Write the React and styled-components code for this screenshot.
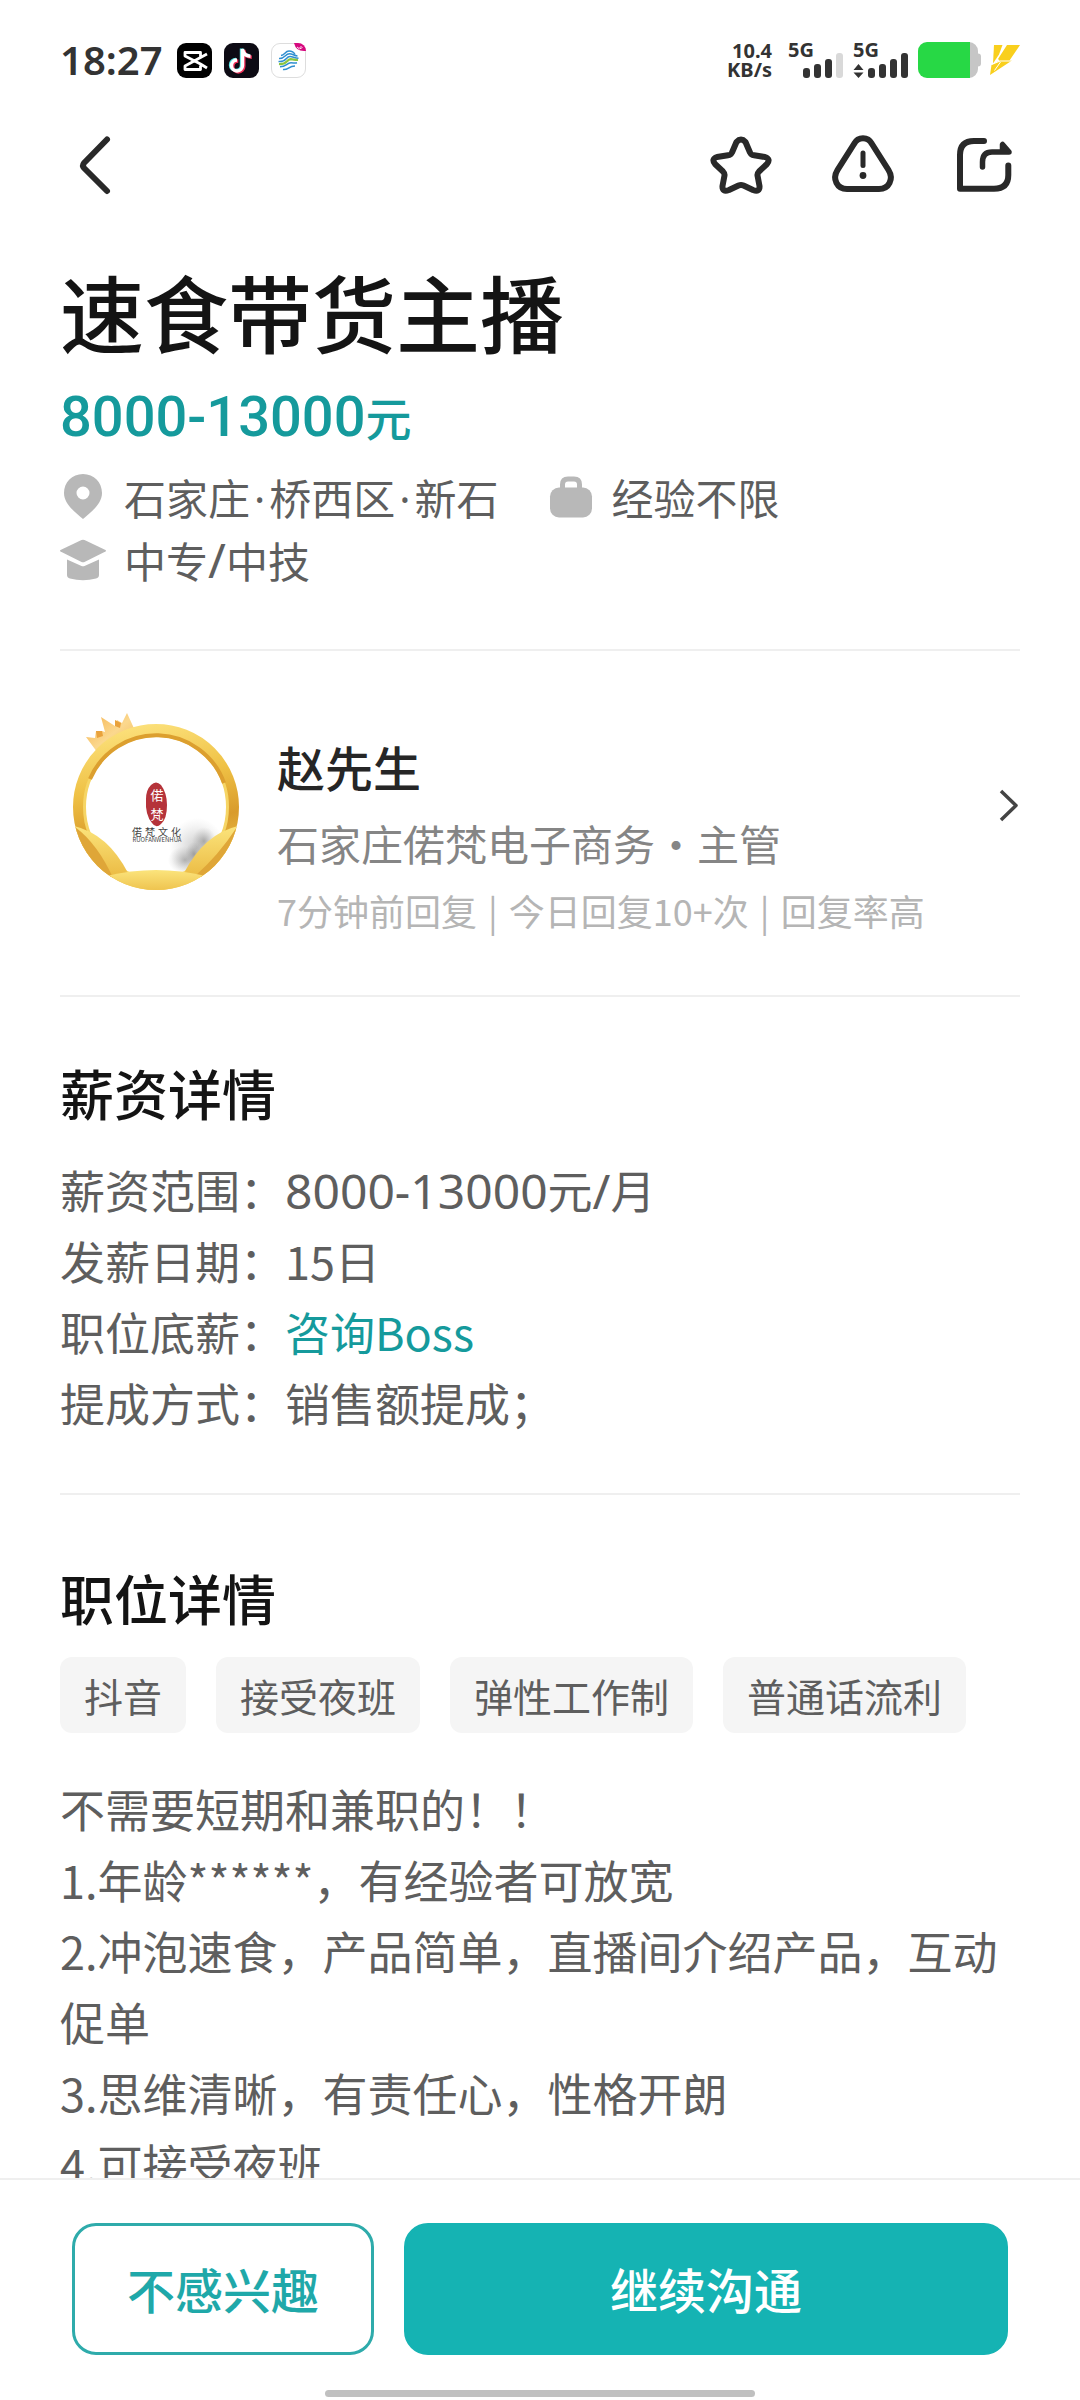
import React from "react";
import styled, { createGlobalStyle } from "styled-components";

const CJK = '"Noto Sans CJK SC", sans-serif';
const LATIN = '"Noto Sans", "Noto Sans CJK SC", sans-serif';

const GlobalStyle = createGlobalStyle`
  * { box-sizing: border-box; }
  body { margin: 0; background: #fff; font-family: ${CJK}; color: #5e5e5e; }
  h1, h2, p, ul, dl, dd, dt { margin: 0; padding: 0; }
  button { font-family: inherit; margin: 0; cursor: pointer; }
  svg { display: block; flex: none; }
`;

const Page = styled.div`
  height: 100vh;
  display: flex;
  flex-direction: column;
`;

/* ---------- status bar ---------- */

const StatusBar = styled.div`
  display: flex;
  align-items: center;
  justify-content: space-between;
  padding: 42px 60px 0;
  height: 78px;
  flex: none;
  font-family: ${LATIN};
  color: #333;
`;

const StatusGroup = styled.div`
  display: flex;
  align-items: center;
  gap: ${(p) => p.$gap}px;
`;

const Clock = styled.span`
  font-size: 40px;
  font-weight: 600;
  line-height: 36px;
  margin-right: 2px;
`;

const NetSpeed = styled.span`
  display: grid;
  justify-items: end;
  font-size: 20px;
  font-weight: 700;
  line-height: 19px;
`;

const Signal = styled.span`
  display: grid;
  grid-template-columns: 15px 41px;
  height: 36px;
`;

const SignalLabel = styled.span`
  grid-area: 1 / 1;
  width: 30px;
  font-size: 20px;
  font-weight: 700;
  line-height: 15px;
`;

const SignalArt = styled.svg`
  grid-area: 1 / 1 / 2 / 3;
`;

/* ---------- header ---------- */

const Header = styled.header`
  display: flex;
  justify-content: space-between;
  padding: 51px 59px 0;
  flex: none;
`;

const Actions = styled.div`
  display: flex;
  gap: 50px;
`;

const IconButton = styled.button`
  width: 72px;
  height: 72px;
  padding: 0;
  border: 0;
  background: none;
  color: #292929;
`;

/* ---------- content ---------- */

const Content = styled.main`
  flex: 1;
  min-height: 0;
  overflow-y: auto;
  scrollbar-width: none;
  padding: 0 60px;
`;

const Section = styled.section`
  padding: ${(p) => p.$top}px 0 ${(p) => p.$bottom}px;
  border-bottom: ${(p) => (p.$last ? "0" : "2px solid #efefef")};
`;

const JobTitle = styled.h1`
  font-size: 84px;
  font-weight: 500;
  line-height: 100px;
  color: #141414;
`;

const Salary = styled.p`
  margin-top: 25px;
  font-size: 46px;
  font-weight: 500;
  line-height: 60px;
  color: #159a9c;
`;

const SalaryDigits = styled.span`
  font-family: Roboto, sans-serif;
  font-size: 56px;
  line-height: 1;
`;

const MetaList = styled.ul`
  display: flex;
  flex-wrap: wrap;
  column-gap: 49px;
  margin-top: 19px;
  list-style: none;
  font-size: 42px;
  line-height: 63px;
`;

const MetaItem = styled.li`
  display: flex;
  align-items: center;
  gap: 18px;
`;

const Dot = styled.span`
  padding: 0 4px;
  font-family: ${LATIN};
  line-height: 1;
`;

const Digits = styled.span`
  font-family: ${LATIN};
  font-size: 48px;
  line-height: 1;
`;

const Bar = styled.span`
  padding: 0 3px;
`;

const ContactRow = styled.button`
  display: flex;
  align-items: flex-start;
  width: 100%;
  padding: 0;
  border: 0;
  background: none;
  text-align: left;
`;

const ContactText = styled.span`
  flex: 1;
  display: grid;
  padding: 16px 0 0 25px;
`;

const Name = styled.span`
  font-size: 48px;
  font-weight: 500;
  line-height: 80px;
  color: #262626;
`;

const Company = styled.span`
  font-size: 42px;
  line-height: 74px;
  color: #858585;
`;

const Reply = styled.span`
  font-size: 36px;
  line-height: 61px;
  color: #b5b5b5;
`;

const SectionTitle = styled.h2`
  font-size: 54px;
  font-weight: 500;
  line-height: 72px;
  color: #141414;
`;

const Facts = styled.dl`
  margin-top: 25px;
  font-size: 45px;
  line-height: 71px;
`;

const Fact = styled.div`
  display: flex;
`;

const BossLink = styled.a`
  color: #159a9c;
  text-decoration: none;
`;

const Tags = styled.ul`
  display: flex;
  flex-wrap: wrap;
  gap: 30px;
  margin-top: 23px;
  list-style: none;
`;

const Tag = styled.li`
  padding: 0 24px;
  border-radius: 12px;
  background: #f5f5f5;
  font-size: 39px;
  line-height: 76px;
`;

const Description = styled.div`
  margin-top: 40px;
  font-size: 45px;
  line-height: 71px;
`;

/* ---------- footer ---------- */

const Footer = styled.footer`
  flex: none;
  border-top: 2px solid #efefef;
  background: #fff;
  padding: 43px 72px 3px;
`;

const ButtonRow = styled.div`
  display: grid;
  grid-template-columns: 1fr 2fr;
  gap: 30px;
`;

const ActionButton = styled.button`
  height: 132px;
  padding: 0 0 3px;
  border: 3px solid ${(p) => (p.$primary ? "#15b3b3" : "#2eabab")};
  border-radius: 24px;
  background: ${(p) => (p.$primary ? "#15b3b3" : "#fff")};
  color: ${(p) => (p.$primary ? "#fff" : "#1fa8a9")};
  font-size: 48px;
  font-weight: 500;
`;

const HomeHandle = styled.div`
  width: 46%;
  height: 7px;
  margin: 35px auto 0;
  border-radius: 4px;
  background: #c0c0c0;
`;

/* ---------- drawings ---------- */

const CapCutIcon = () => (
  <svg width="35" height="35" viewBox="0 0 35 35">
    <rect width="35" height="35" rx="9" fill="#000" />
    <path
      d="M30 11L23.500 14.500 8 23v3.500h15.500v-4M30 25L23.500 21 8 13V9.500h15.500v4"
      fill="none" stroke="#fff" strokeWidth="2.800" strokeLinejoin="round"
    />
  </svg>
);

const notePath = "M18.500 6v16.500a5.500 5.500 0 1 1-5.500-5.500M18.500 6c.6 4.300 3.600 7 8 7.200";

const TikTokIcon = () => (
  <svg width="35" height="35" viewBox="0 0 35 35">
    <rect width="35" height="35" rx="9" fill="#0d0b14" />
    <g fill="none" strokeWidth="3.400">
      <path d={notePath} stroke="#5ce6e6" transform="translate(-1 -.6)" />
      <path d={notePath} stroke="#f0315a" transform="translate(1.300 1)" />
      <path d={notePath} stroke="#fff" />
    </g>
  </svg>
);

const CarrierIcon = () => (
  <svg width="35" height="35" viewBox="0 0 35 35">
    <rect x=".5" y=".5" width="34" height="34" rx="8.500" fill="#fff" stroke="#ddd" />
    <g fill="none" strokeWidth="1.500">
      <path d="M10 12.500c4-.5 4-4.500 8-4.500 3 0 5 1.500 6 3.500" stroke="#2f8fd0" />
      <path d="M8 15.500c6 .4 6-4.800 10.500-4.800 3 0 4.500 2 8 2.300" stroke="#2f8fd0" />
      <path d="M7.500 18.500c8 1 7-5 11.500-5 3 0 4 1.500 8.500 1.800" stroke="#2f8fd0" />
      <path d="M8 21c8 .6 7.500-4.500 11.500-4.800 3 0 4.500 1 7.500.8" stroke="#8cc63f" strokeWidth="2.200" />
      <path d="M9 23.800c6.500 0 6.500-4 11-4 2.500 0 4 .5 6 0" stroke="#2f8fd0" />
      <path d="M12 26.500c5 1 5.500-3.500 12-3.500" stroke="#2f8fd0" />
    </g>
    <path d="M23 0h4a8 8 0 0 1 8 8Q25 9 23 0z" fill="#d6087e" />
    <path d="M26 4l2 1.500 2.500-2.500M28.500 6l3-1.500" stroke="#fff" strokeWidth=".9" fill="none" />
  </svg>
);

const bars = [
  [15, 26, 10],
  [26, 22, 14],
  [37, 17, 19],
  [48, 11, 25],
];

function SignalMeter({ weak, arrows }) {
  return (
    <Signal>
      <SignalLabel>5G</SignalLabel>
      <SignalArt width="56" height="36" viewBox="0 0 56 36">
        {bars.map(([x, y, h], i) => (
          <rect key={x} x={x} y={y} width="7" height={h} rx="3"
            fill={weak && i === 3 ? "#d9d9d9" : "#333"} />
        ))}
        {arrows && <path d="M5.500 22L10.500 28H.5zM5.500 36L.5 30.500h10z" fill="#333" />}
      </SignalArt>
    </Signal>
  );
}

const Battery = () => (
  <svg width="63" height="36" viewBox="0 0 63 36">
    <path d="M50 0h1a9 9 0 0 1 9 9v2.500q3 0 3 3v7q0 3-3 3V27a9 9 0 0 1-9 9h-1z" fill="#c6c6c6" />
    <path d="M9 0h43v36H9a9 9 0 0 1-9-9V9a9 9 0 0 1 9-9z" fill="#27d845" />
  </svg>
);

const Bolt = () => (
  <svg width="30" height="30" viewBox="0 0 30 30">
    <path d="M4 0h8.500L9 9.500l-6 9z" fill="#f9cf1d" />
    <path d="M17 0h13L19.500 15.500H22L0 30 1.500 20 9.500 15.500 8 14z" fill="#f9cf1d" />
    <path d="M1.500 19.500L10 16h12" fill="none" stroke="#fff" strokeWidth="1.200" />
    <path d="M10.500 17L4.500 25.500" fill="none" stroke="#fff" strokeWidth="1" />
  </svg>
);

const Line = ({ children }) => (
  <svg width="72" height="72" viewBox="0 0 72 72" fill="none" stroke="currentColor"
    strokeWidth="6" strokeLinecap="round" strokeLinejoin="round">
    {children}
  </svg>
);

const BackIcon = () => (
  <Line>
    <path d="M48 10.500L25 34Q23 36.500 25 39L48 62" />
  </Line>
);

const StarIcon = () => (
  <Line>
    <path d="M31.500 13Q36 8 40.500 13L45 23.500Q46 26 49 26.300L60 28Q66 30 62 35L54 42.500Q52 44.500 52.600 47L54.500 57Q55 63.500 48 61L38.500 56.500Q36 55.500 33.500 56.500L24 61Q17 63.500 17.500 57L19.400 47Q20 44.500 18 42.500L10 35Q6 30 12 28L23 26.300Q26 26 27 23.500Z" />
  </Line>
);

const WarnIcon = () => (
  <Line>
    <path d="M27 15C31 7.300 41 7.300 45 15L61.500 41C67 50 62 60 52 60H20C10 60 5 50 10.500 41Z" />
    <path d="M36 24V36.500" strokeWidth="5" />
    <circle cx="36" cy="46.500" r="3.400" fill="currentColor" stroke="none" />
  </Line>
);

const ShareIcon = () => (
  <Line>
    <path d="M35 12H25Q11 12 11 26V59.700H45Q59.300 59.700 59.300 46V36.500" />
    <path d="M33.500 38V33Q33.500 23 43 23H60L53.500 15.500V22" strokeWidth="5.500" />
  </Line>
);

const PinIcon = () => (
  <svg width="46" height="46" viewBox="0 0 46 46" fill="#b8b8b8">
    <path fillRule="evenodd" d="M23 0C12 0 4 8.500 4 19c0 11 11 19 19 26 8-7 19-15 19-26C42 8.500 34 0 23 0zm0 12.500a6.500 6.500 0 1 1 0 13 6.500 6.500 0 0 1 0-13z" />
  </svg>
);

const BagIcon = () => (
  <svg width="46" height="46" viewBox="0 0 46 46">
    <path d="M14.500 15V10.500q0-5.500 5.500-5.500h6q5.500 0 5.500 5.500v4.500" fill="none" stroke="#b8b8b8" strokeWidth="5" />
    <rect x="2" y="13.500" width="42" height="30" rx="9" fill="#b8b8b8" />
  </svg>
);

const CapIcon = () => (
  <svg width="46" height="46" viewBox="0 0 46 46" fill="#b8b8b8">
    <path d="M21.500 3q1.500-.7 3 0L45.500 13q1 .8 0 1.600L24.500 25q-1.500.7-3 0L.5 14.600q-1-.8 0-1.600z" />
    <path d="M7 22.500l14.500 6.500q1.500.7 3 0L39 22.500V38q0 2.500-3 3.500-13 3.500-26 0-3-1-3-3.500z" />
  </svg>
);

const Avatar = () => (
  <svg width="192" height="192" viewBox="0 0 192 192">
    <defs>
      <linearGradient id="ring" x1="0.300" y1="0" x2="0.500" y2="1">
        <stop offset="0" stopColor="#fbdf78" />
        <stop offset=".35" stopColor="#efc145" />
        <stop offset=".65" stopColor="#d99b2b" />
        <stop offset="1" stopColor="#f2cc50" />
      </linearGradient>
      <linearGradient id="leaf" x1="0" y1="0" x2="0" y2="1">
        <stop offset="0" stopColor="#fbe47c" />
        <stop offset="1" stopColor="#ebba42" />
      </linearGradient>
      <linearGradient id="crown" x1="0" y1="0" x2="1" y2="1">
        <stop offset="0" stopColor="#f5b04c" />
        <stop offset=".5" stopColor="#fbd88e" />
        <stop offset="1" stopColor="#f2b44a" />
      </linearGradient>
      <radialGradient id="ink">
        <stop offset="0" stopColor="#666" stopOpacity=".45" />
        <stop offset="1" stopColor="#999" stopOpacity="0" />
      </radialGradient>
      <clipPath id="disc"><circle cx="96" cy="97" r="83" /></clipPath>
    </defs>
    <circle cx="96" cy="97" r="72" fill="#fff" />
    <g clipPath="url(#disc)">
      <ellipse cx="137" cy="138" rx="28" ry="30" fill="url(#ink)" opacity=".8" />
      <ellipse cx="144" cy="131" rx="12" ry="14" fill="url(#ink)" />
      <ellipse cx="125" cy="150" rx="17" ry="14" fill="url(#ink)" />
      <ellipse cx="134" cy="144" rx="9" ry="12" fill="url(#ink)" />
    </g>
    <path d="M91 75q5-5 10 0 6 8 6 20 0 14-6 19-5 5-9-1-7-8-6-24 0-9 5-14z" fill="#b5333a" />
    <g fill="#fff" fontFamily='"Noto Sans CJK SC", sans-serif' fontSize="13" textAnchor="middle">
      <text x="97" y="90">偌</text>
      <text x="97" y="109">梵</text>
    </g>
    <g fill="#444" fontFamily='"Noto Sans CJK SC", sans-serif' fontSize="10" textAnchor="middle">
      <text x="77" y="126">偌</text>
      <text x="90" y="126">梵</text>
      <text x="103" y="126">文</text>
      <text x="116" y="126">化</text>
      <text x="97" y="132" fontSize="6">RUOFANWENHUA</text>
    </g>
    <path d="M26 27l9 1 1-7h6l3 1-4-15 14 9 2-6 5 3 5-10 10 22q-22 6-37 21z" fill="url(#crown)" />
    <path d="M36 21h6l1 5-6 2zM55 10l6 3-1 5-5-2z" fill="#e9a23c" />
    <circle cx="96" cy="97" r="77" fill="none" stroke="url(#ring)" strokeWidth="12" />
    <circle cx="96" cy="97" r="71.500" fill="none" stroke="#f6d565" strokeWidth="3" />
    <path d="M30 69A72 72 0 0 1 164 73" fill="none" stroke="#dc9f2f" strokeWidth="4" />
    <g clipPath="url(#disc)">
      <path d="M14 116Q48 124 68 163L50 168Q22 160 14 116z" fill="url(#leaf)" />
      <path d="M15 117Q38 134 54 170L30 172Q10 140 15 117z" fill="#dfa638" />
      <path d="M178 116Q144 124 124 163L142 168Q170 160 178 116z" fill="url(#leaf)" />
      <path d="M177 117Q158 146 135 166L162 172Q182 140 177 117z" fill="#dfa638" />
      <path d="M46 166Q96 154 146 166L130 186H62z" fill="url(#leaf)" />
    </g>
  </svg>
);

const ChevronRight = () => (
  <svg width="22" height="192" viewBox="0 0 22 192" fill="none" stroke="#444" strokeWidth="3.500" strokeLinejoin="round">
    <path d="M3 81L18 95.500L3 110" />
  </svg>
);

const facts = [
  ["薪资范围", <><Digits>8000-13000</Digits>元<Digits>/</Digits>月</>],
  ["发薪日期", "15日"],
  ["职位底薪", <BossLink href="#boss">咨询Boss</BossLink>],
  ["提成方式", "销售额提成；"],
];

const tags = ["抖音", "接受夜班", "弹性工作制", "普通话流利"];

const description = [
  "不需要短期和兼职的！！",
  "1.年龄******，有经验者可放宽",
  "2.冲泡速食，产品简单，直播间介绍产品，互动促单",
  "3.思维清晰，有责任心，性格开朗",
  "4.可接受夜班",
];

export default function App() {
  return (
    <Page>
      <GlobalStyle />
      <StatusBar>
        <StatusGroup $gap={12}>
          <Clock>18:27</Clock>
          <CapCutIcon />
          <TikTokIcon />
          <CarrierIcon />
        </StatusGroup>
        <StatusGroup $gap={16}>
          <NetSpeed>
            <span>10.4</span>
            <span>KB/s</span>
          </NetSpeed>
          <StatusGroup $gap={9}>
            <SignalMeter weak />
            <SignalMeter arrows />
            <Battery />
            <Bolt />
          </StatusGroup>
        </StatusGroup>
      </StatusBar>

      <Header>
        <IconButton aria-label="返回"><BackIcon /></IconButton>
        <Actions>
          <IconButton aria-label="收藏"><StarIcon /></IconButton>
          <IconButton aria-label="举报"><WarnIcon /></IconButton>
          <IconButton aria-label="分享"><ShareIcon /></IconButton>
        </Actions>
      </Header>

      <Content>
        <Section $top={60} $bottom={58}>
          <JobTitle>速食带货主播</JobTitle>
          <Salary><SalaryDigits>8000-13000</SalaryDigits>元</Salary>
          <MetaList>
            <MetaItem>
              <PinIcon />
              <span>石家庄<Dot>·</Dot>桥西区<Dot>·</Dot>新石</span>
            </MetaItem>
            <MetaItem><BagIcon /><span>经验不限</span></MetaItem>
            <MetaItem><CapIcon /><span>中专<Digits>/</Digits>中技</span></MetaItem>
          </MetaList>
        </Section>

        <Section $top={59} $bottom={54}>
          <ContactRow>
            <Avatar />
            <ContactText>
              <Name>赵先生</Name>
              <Company>石家庄偌梵电子商务・主管</Company>
              <Reply>
                7分钟前回复<Bar> | </Bar>今日回复10+次<Bar> | </Bar>回复率高
              </Reply>
            </ContactText>
            <ChevronRight />
          </ContactRow>
        </Section>

        <Section $top={60} $bottom={55}>
          <SectionTitle>薪资详情</SectionTitle>
          <Facts>
            {facts.map(([label, value]) => (
              <Fact key={label}>
                <dt>{label}：</dt>
                <dd>{value}</dd>
              </Fact>
            ))}
          </Facts>
        </Section>

        <Section $top={67} $bottom={40} $last>
          <SectionTitle>职位详情</SectionTitle>
          <Tags>
            {tags.map((t) => <Tag key={t}>{t}</Tag>)}
          </Tags>
          <Description>
            {description.map((line) => <p key={line}>{line}</p>)}
          </Description>
        </Section>
      </Content>

      <Footer>
        <ButtonRow>
          <ActionButton>不感兴趣</ActionButton>
          <ActionButton $primary>继续沟通</ActionButton>
        </ButtonRow>
        <HomeHandle />
      </Footer>
    </Page>
  );
}
